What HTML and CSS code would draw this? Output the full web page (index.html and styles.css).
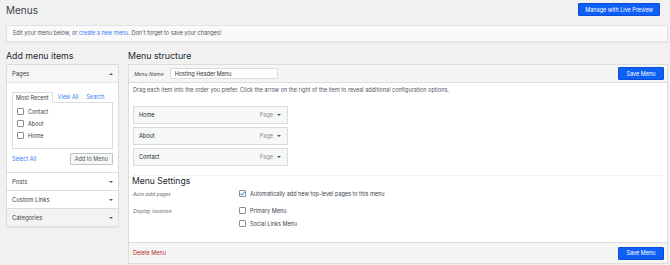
FILE: index.html
```html
<!DOCTYPE html>
<html>
<head>
    <link rel="stylesheet" href="styles.css">
</head>
<body>
    <div class="page-header">
        <h1 class="page-title">Menus</h1>
        <button class="btn btn-primary">Manage with Live Preview</button>
    </div>
    <div class="notice">
        Edit your menu below, or <a href="#">create a new menu</a>. Don't forget to save your changes!
    </div>
    <div class="columns">
        <div class="col-left">
            <h2 class="col-title">Add menu items</h2>
            <div class="accordion">
                <div class="acc-section open">
                    <div class="acc-head">
                        <span>Pages</span>
                        <span class="arrow up"></span>
                    </div>
                    <div class="acc-body">
                        <div class="tabs">
                            <span class="tab active">Most Recent</span>
                            <a class="tab" href="#">View All</a>
                            <a class="tab" href="#">Search</a>
                        </div>
                        <div class="tab-panel">
                            <label class="check-row"><span class="check"></span>Contact</label>
                            <label class="check-row"><span class="check"></span>About</label>
                            <label class="check-row"><span class="check"></span>Home</label>
                        </div>
                        <div class="acc-actions">
                            <a href="#">Select All</a>
                            <button class="btn btn-secondary">Add to Menu</button>
                        </div>
                    </div>
                </div>
                <div class="acc-section">
                    <div class="acc-head"><span>Posts</span><span class="arrow"></span></div>
                </div>
                <div class="acc-section">
                    <div class="acc-head"><span>Custom Links</span><span class="arrow"></span></div>
                </div>
                <div class="acc-section hover">
                    <div class="acc-head"><span>Categories</span><span class="arrow"></span></div>
                </div>
            </div>
        </div>
        <div class="col-right">
            <h2 class="col-title">Menu structure</h2>
            <div class="menu-panel">
                <div class="panel-head">
                    <label class="name-label">Menu Name</label>
                    <input class="name-input" type="text" value="Hosting Header Menu">
                    <button class="btn btn-primary btn-save">Save Menu</button>
                </div>
                <div class="panel-body">
                    <p class="hint">Drag each item into the order you prefer. Click the arrow on the right of the item to reveal additional configuration options.</p>
                    <ul class="menu-items">
                        <li class="menu-item"><span>Home</span><span class="item-type">Page <span class="arrow"></span></span></li>
                        <li class="menu-item"><span>About</span><span class="item-type">Page <span class="arrow"></span></span></li>
                        <li class="menu-item"><span>Contact</span><span class="item-type">Page <span class="arrow"></span></span></li>
                    </ul>
                    <div class="settings">
                        <h3 class="settings-title">Menu Settings</h3>
                        <div class="setting-row">
                            <div class="setting-label">Auto add pages</div>
                            <div class="setting-options">
                                <label class="check-row"><span class="check checked"><svg viewBox="0 0 10 10"><path d="M2 5.2 L4.1 7.3 L8.2 2.6" fill="none" stroke="#2a6fd6" stroke-width="1.4"/></svg></span>Automatically add new top-level pages to this menu</label>
                            </div>
                        </div>
                        <div class="setting-row">
                            <div class="setting-label">Display location</div>
                            <div class="setting-options">
                                <label class="check-row"><span class="check"></span>Primary Menu</label>
                                <label class="check-row"><span class="check"></span>Social Links Menu</label>
                            </div>
                        </div>
                    </div>
                </div>
                <div class="panel-foot">
                    <a class="delete-link" href="#">Delete Menu</a>
                    <button class="btn btn-primary btn-save">Save Menu</button>
                </div>
            </div>
        </div>
    </div>
</body>
</html>
```

FILE: styles.css
```css
body {
    margin: 0;
    padding: 3px 2px 0 6px;
    background-color: #f1f1f1;
    font-family: Inter, "Open Sans", sans-serif;
    font-size: 5.5px;
    color: #50575e;
    overflow: hidden;
}
a {
    color: #3582f6;
    text-decoration: none;
}
.page-header {
    display: flex;
    justify-content: space-between;
    align-items: flex-start;
    height: 22px;
    padding-right: 8px;
}
.page-title {
    margin: 1px 0 0;
    font-size: 10px;
    font-weight: 400;
    color: #3c434a;
}
.btn {
    font-family: inherit;
    font-size: 5.5px;
    border-radius: 1px;
    cursor: pointer;
    padding: 0 6px;
    white-space: nowrap;
}
.btn-primary {
    height: 13px;
    background-color: #0e5ff6;
    border: 1px solid #0a4fd6;
    color: white;
}
.btn-secondary {
    height: 12px;
    background-color: #f6f7f7;
    border: 1px solid #c3c4c7;
    color: #50575e;
    padding: 0 4px;
}
.notice {
    height: 15px;
    line-height: 15px;
    padding-left: 6px;
    background-color: #fafafa;
    border: 1px solid #e3e3e3;
    box-shadow: 0 1px 1px rgba(0,0,0,0.03);
    white-space: nowrap;
}
.columns {
    display: flex;
    gap: 9px;
    margin-top: 6px;
}
.col-left {
    width: 113px;
}
.col-right {
    flex: 1;
}
.col-title {
    margin: 0 0 2px;
    height: 14px;
    line-height: 15px;
    font-size: 8.8px;
    font-weight: 400;
    color: #23282d;
}
.accordion {
    background-color: white;
    border: 1px solid #dcdcde;
    box-shadow: 0 1px 1px rgba(0,0,0,0.04);
}
.acc-head {
    height: 17px;
    display: flex;
    justify-content: space-between;
    align-items: center;
    padding: 0 5px;
    font-size: 5.9px;
    color: #3c434a;
}
.acc-section {
    border-top: 1px solid #dcdcde;
}
.acc-section:first-child {
    border-top: none;
}
.acc-section.open .acc-head {
    background-color: #f6f6f6;
    border-bottom: 1px solid #e6e6e6;
}
.acc-section.hover .acc-head {
    background-color: #f3f3f3;
}
.arrow {
    display: inline-block;
    width: 0;
    height: 0;
    border-left: 2.5px solid transparent;
    border-right: 2.5px solid transparent;
    border-top: 2.5px solid #50575e;
}
.arrow.up {
    border-top: none;
    border-bottom: 2.5px solid #50575e;
}
.acc-body {
    padding: 9px 5px 7px;
}
.tabs {
    display: flex;
    white-space: nowrap;
}
.tab {
    padding: 2px 3px 1px;
    font-size: 5.5px;
    margin-right: 2px;
}
.tab.active {
    border: 1px solid #dcdcde;
    border-bottom: 1px solid white;
    margin-bottom: -1px;
    color: #3c434a;
    background-color: white;
    position: relative;
}
.tab-panel {
    border: 1px solid #dcdcde;
    height: 40px;
    padding: 5px 4px 0;
    display: flex;
    flex-direction: column;
    gap: 5px;
}
.check-row {
    display: flex;
    align-items: center;
    gap: 4px;
    font-size: 5.5px;
    color: #3c434a;
    white-space: nowrap;
}
.check {
    width: 5px;
    height: 5px;
    border: 1px solid #8c8f94;
    border-radius: 1px;
    background-color: white;
    display: inline-flex;
}
.check svg {
    width: 7px;
    height: 7px;
    margin: -1px;
}
.acc-actions {
    display: flex;
    justify-content: space-between;
    align-items: center;
    margin-top: 4px;
    font-size: 5.5px;
}
.menu-panel {
    background-color: white;
    border: 1px solid #dcdcde;
    box-shadow: 0 1px 1px rgba(0,0,0,0.04);
}
.panel-head {
    height: 17px;
    display: flex;
    align-items: center;
    padding: 0 3px 0 5px;
    background-color: #f5f5f5;
    border-bottom: 1px solid #dcdcde;
}
.name-label {
    font-family: "Open Sans", sans-serif;
    font-style: italic;
    font-size: 5.5px;
    color: #3c434a;
    margin-right: 6px;
}
.name-input {
    width: 108px;
    height: 11px;
    box-sizing: border-box;
    border: 1px solid #dcdcde;
    border-radius: 1px;
    padding: 0 4px;
    font-family: inherit;
    font-size: 5.5px;
    color: #2c3338;
}
.btn-save {
    margin-left: auto;
    height: 13px;
    width: 46px;
    padding: 0;
}
.panel-body {
    padding: 0 4px;
}
.hint {
    margin: 0;
    padding: 4px 0 0;
    font-size: 5.5px;
    color: #50575e;
    white-space: nowrap;
}
.menu-items {
    list-style: none;
    margin: 13px 0 0;
    padding: 0;
    width: 155px;
    display: flex;
    flex-direction: column;
    gap: 3px;
}
.menu-item {
    height: 18px;
    box-sizing: border-box;
    display: flex;
    justify-content: space-between;
    align-items: center;
    padding: 0 6px 0 5px;
    background-color: #f6f7f7;
    border: 1px solid #dcdcde;
    font-size: 5.5px;
    color: #1d2327;
}
.item-type {
    display: flex;
    align-items: center;
    gap: 4px;
    color: #8c8f94;
}
.settings {
    margin-top: 9px;
    border-top: 1px solid #f0f0f1;
    padding-bottom: 15px;
}
.settings-title {
    margin: 0 0 0 -1px;
    font-size: 8.6px;
    font-weight: 400;
    color: #23282d;
}
.setting-row {
    display: flex;
    margin-top: 4px;
}
.setting-row + .setting-row {
    margin-top: 9px;
}
.setting-label {
    width: 106px;
    font-family: "Open Sans", sans-serif;
    font-style: italic;
    font-size: 5.5px;
    color: #646970;
}
.setting-options {
    display: flex;
    flex-direction: column;
    gap: 6px;
}
.panel-foot {
    height: 20px;
    display: flex;
    align-items: center;
    padding: 0 3px 0 4px;
    background-color: #f5f5f5;
    border-top: 1px solid #dcdcde;
}
.delete-link {
    color: #b32d2e;
    font-size: 5.5px;
}
```
